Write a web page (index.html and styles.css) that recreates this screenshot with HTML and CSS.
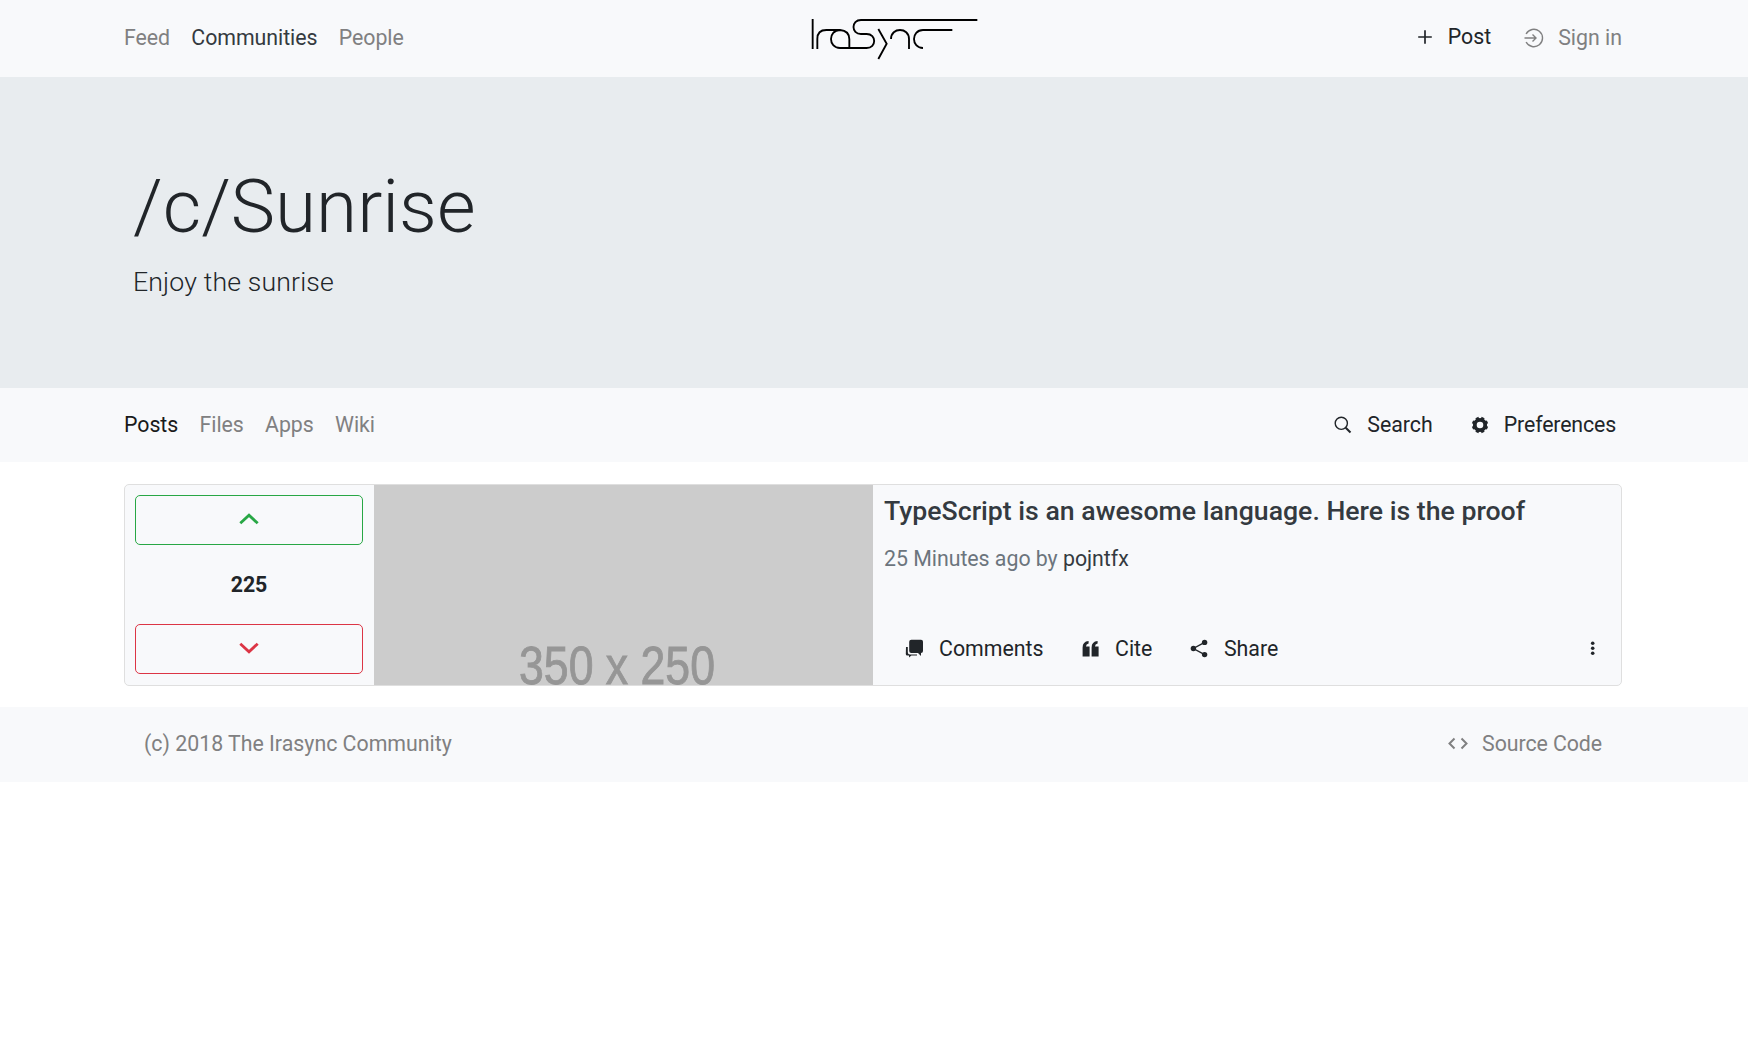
FILE: index.html
```html
<!DOCTYPE html>
<html lang="en">
<head>
<meta charset="utf-8">
<title>/c/Sunrise - Irasync</title>
<link rel="stylesheet" href="styles.css">
</head>
<body>
<header class="bar topbar">
  <nav class="links">
    <a class="muted">Feed</a><a class="active">Communities</a><a class="muted">People</a>
  </nav>
  <svg class="logo" viewBox="30 24 507 126" aria-label="IraSync">
    <path d="M38 27V117M52 117V87Q52 60 79 60H120Q148 62 148 88V114M120 60C84 60 84 114 120 114H200C230 114 230 72 200 72H183C153 72 153 30 183 30H532M235 57L260 101L235 147M273 87C273 51 327 51 327 87V117M457 60H369C333 60 333 114 369 114"/>
  </svg>
  <div class="actions account">
    <a class="post"><svg class="icon plus" viewBox="0 0 20 20"><path d="M10 3.2V16.8M3.2 10H16.8"/></svg>Post</a>
    <a class="muted signin"><svg class="icon" viewBox="0 0 20 20"><path d="M2.1 6A8.7 8.7 0 1 1 2.1 14M.5 10H12M8.5 6.5L12 10L8.5 13.5"/></svg>Sign in</a>
  </div>
</header>
<section class="hero">
  <h1>/c/Sunrise</h1>
  <p>Enjoy the sunrise</p>
</section>
<div class="bar subbar">
  <nav class="links">
    <a class="current">Posts</a><a class="muted">Files</a><a class="muted">Apps</a><a class="muted">Wiki</a>
  </nav>
  <div class="actions tools">
    <a><svg class="icon" viewBox="0 0 20 20"><circle cx="8.3" cy="8.3" r="6.1"/><path class="heavy" d="M12.7 12.7L17.5 17.5"/></svg>Search</a>
    <a class="preferences"><svg class="icon" viewBox="0 0 20 20"><circle class="gear" cx="10" cy="10" r="5.2"/><path class="teeth" d="M7.8 4.6L6.9 2.5M12.2 4.6L13.1 2.5M15.4 7.8L17.5 6.9M15.4 12.2L17.5 13.1M12.2 15.4L13.1 17.5M7.8 15.4L6.9 17.5M4.6 12.2L2.5 13.1M4.6 7.8L2.5 6.9"/></svg>Preferences</a>
  </div>
</div>
<main>
  <article class="card">
    <div class="votes">
      <button class="vote up" aria-label="Vote up"><svg class="icon" viewBox="0 0 20 20"><path d="M1.3 14.3L10 6.2L18.7 14.3"/></svg></button>
      <strong>225</strong>
      <button class="vote down" aria-label="Vote down"><svg class="icon" viewBox="0 0 20 20"><path d="M1.3 5.7L10 13.8L18.7 5.7"/></svg></button>
    </div>
    <svg class="thumb" viewBox="0 0 499 200"><text x="145" y="198.5" textLength="196" lengthAdjust="spacingAndGlyphs">350 x 250</text></svg>
    <div class="content">
      <h2>TypeScript is an awesome language. Here is the proof</h2>
      <p class="byline">25 Minutes ago by <a>pojntfx</a></p>
      <div class="post-actions">
        <a><svg class="icon solid" viewBox="0 0 20 20"><path d="M7.4 .8H17Q19 .8 19 2.8V12Q19 14 17 14V17L14 14H7.2Q5.2 14 5.2 12V2.8Q5.2 .8 7.4 .8ZM2 8H3.8V13.2Q3.8 15.4 6 15.4H13V16.6H7.4L5 18.6V16.6H3.4Q1.8 16.6 1.8 15Z"/></svg>Comments</a>
        <a><svg class="icon solid" viewBox="0 0 20 20"><path d="M2.6 17.5V8.5Q2.6 2.5 8.6 2V4.5Q6 5 6 7.5H9.6V17.5ZM11.6 17.5V8.5Q11.6 2.5 17.6 2V4.5Q15 5 15 7.5H18.6V17.5Z"/></svg>Cite</a>
        <a><svg class="icon solid" viewBox="0 0 20 20"><circle cx="4.4" cy="9.5" r="2.7"/><circle cx="15.6" cy="3.4" r="2.7"/><circle cx="15.6" cy="15.6" r="2.7"/><path class="joint" d="M15.6 3.4L4.4 9.5L15.6 15.6"/></svg>Share</a>
        <a class="more" aria-label="More"><svg class="icon solid" viewBox="0 0 20 20"><circle cx="9.7" cy="4.3" r="1.8"/><circle cx="9.7" cy="9.3" r="1.8"/><circle cx="9.7" cy="14.3" r="1.8"/></svg></a>
      </div>
    </div>
  </article>
</main>
<footer class="bar subbar footer">
  <span class="muted">(c) 2018 The Irasync Community</span>
  <a class="muted source"><svg class="icon code" viewBox="0 0 20 20"><path d="M6.5 4.5L1.5 9.5L6.5 14.5M13.5 4.5L18.5 9.5L13.5 14.5"/></svg>Source Code</a>
</footer>
</body>
</html>
```
FILE: styles.css
```css
* { box-sizing: border-box; }
body { margin: 0; background: #fff; color: #212529; font: 400 21.333px/32px Roboto, sans-serif; }
h1, h2, p { margin: 0; }
.bar { display: flex; align-items: center; justify-content: space-between; padding: 0 126px 0 124px; height: 74px; }
.bar, .card { background: #f8f9fb; }
.topbar { display: grid; grid-template-columns: 686px 169px 1fr; height: 77px; padding-bottom: 2px; }
.links { display: flex; gap: 21.3px; letter-spacing: -.05px; }
.muted { color: #808081; }
.active { color: #343a40; }
.current { color: #191a1a; }
.logo { width: 169px; height: 42px; fill: none; stroke: #000; stroke-width: 5.6; align-self: start; margin-top: 18px; }
.icon { width: 20px; height: 20px; flex: none; fill: none; stroke: currentColor; stroke-width: 1.4; }
.solid { fill: currentColor; stroke: none; }
.joint { fill: none; stroke: currentColor; stroke-width: 1.4; }
.heavy { stroke-width: 2; }
.gear { stroke-width: 3.8; }
.teeth { stroke-width: 3.2; }
.actions, .actions a, .source, .post-actions, .post-actions a { display: flex; align-items: center; }
.actions a, .source, .post-actions a { gap: 14px; }
.account { justify-self: end; gap: 33px; }
.actions .post { margin-top: -2px; gap: 13px; }
.plus { stroke-width: 1.7; }
.tools { gap: 37px; padding-right: 6px; }
.preferences { letter-spacing: -.15px; }
.hero { height: 311px; padding: 85px 133px 0; background: #e8ecef; }
.hero h1 { font-size: 74.667px; line-height: 90px; font-weight: 300; }
.hero p { margin-top: 10px; font-size: 26.667px; line-height: 40px; font-weight: 300; letter-spacing: .15px; }
main { padding: 22px 126px 21px 124px; }
.card { display: grid; grid-template-columns: 249px 499px 1fr; height: 202px; border: 1px solid #dfdfdf; border-radius: 5px; overflow: hidden; }
.votes { display: flex; flex-direction: column; justify-content: space-between; padding: 10px 11px 11px 10px; text-align: center; }
.vote { height: 50px; display: flex; align-items: center; justify-content: center; padding: 0 0 2px; background: transparent; border: 1px solid; border-radius: 5px; }
.vote .icon { stroke-width: 2.8; }
.up { color: #28a745; }
.down { color: #dc3545; }
.thumb { display: block; width: 499px; height: 200px; background: #ccc; }
.thumb text { fill: #969696; stroke: #969696; stroke-width: .9; font: 54px "Liberation Sans", sans-serif; }
.content { display: flex; flex-direction: column; padding: 10px 18px 20px 11px; }
.content h2 { font-size: 26.667px; line-height: 32px; font-weight: 500; color: #343a40; }
.byline { margin-top: 16px; color: #6c757d; letter-spacing: -.03px; }
.byline a { color: #343a40; }
.post-actions { margin-top: auto; padding-left: 20px; gap: 37px; }
.post-actions a { gap: 15px; }
.post-actions a + a { margin-left: -.5px; }
.post-actions a.more { margin-left: auto; }
.footer { padding: 0 146px 1px 144px; height: 75px; }
.source { letter-spacing: -.08px; }
.code { stroke-width: 2; }
```
